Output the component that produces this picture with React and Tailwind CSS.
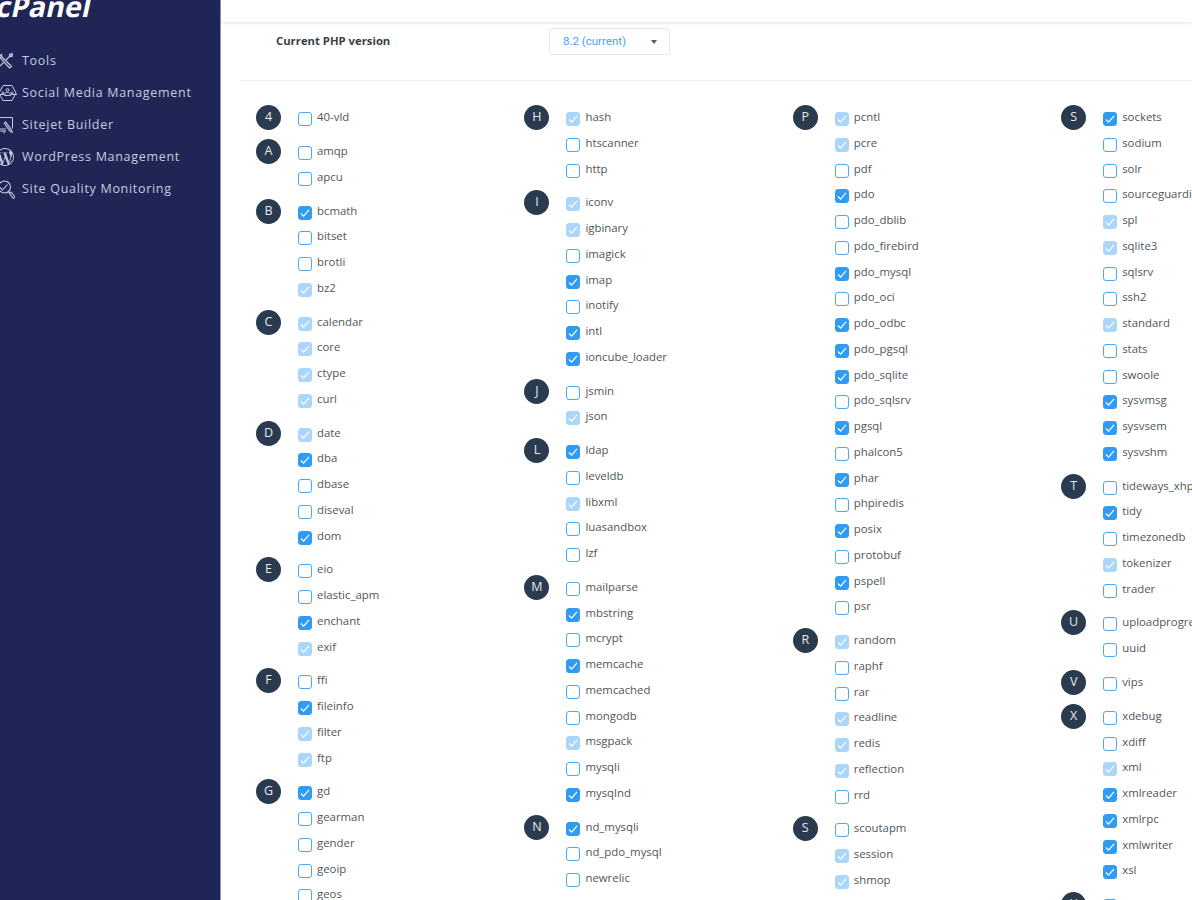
import { SiWordpress } from 'react-icons/si'

// u = unchecked, c = checked, d = checked and locked
const columns = [
  [
    ['4', ['40-vld:u']],
    ['A', ['amqp:u', 'apcu:u']],
    ['B', ['bcmath:c', 'bitset:u', 'brotli:u', 'bz2:d']],
    ['C', ['calendar:d', 'core:d', 'ctype:d', 'curl:d']],
    ['D', ['date:d', 'dba:c', 'dbase:u', 'diseval:u', 'dom:c']],
    ['E', ['eio:u', 'elastic_apm:u', 'enchant:c', 'exif:d']],
    ['F', ['ffi:u', 'fileinfo:c', 'filter:d', 'ftp:d']],
    ['G', ['gd:c', 'gearman:u', 'gender:u', 'geoip:u', 'geos:u']],
  ],
  [
    ['H', ['hash:d', 'htscanner:u', 'http:u']],
    ['I', ['iconv:d', 'igbinary:d', 'imagick:u', 'imap:c', 'inotify:u', 'intl:c', 'ioncube_loader:c']],
    ['J', ['jsmin:u', 'json:d']],
    ['L', ['ldap:c', 'leveldb:u', 'libxml:d', 'luasandbox:u', 'lzf:u']],
    ['M', ['mailparse:u', 'mbstring:c', 'mcrypt:u', 'memcache:c', 'memcached:u', 'mongodb:u', 'msgpack:d', 'mysqli:u', 'mysqlnd:c']],
    ['N', ['nd_mysqli:c', 'nd_pdo_mysql:u', 'newrelic:u']],
    ['O', ['oauth:u']],
  ],
  [
    ['P', ['pcntl:d', 'pcre:d', 'pdf:u', 'pdo:c', 'pdo_dblib:u', 'pdo_firebird:u', 'pdo_mysql:c', 'pdo_oci:u', 'pdo_odbc:c', 'pdo_pgsql:c', 'pdo_sqlite:c', 'pdo_sqlsrv:u', 'pgsql:c', 'phalcon5:u', 'phar:c', 'phpiredis:u', 'posix:c', 'protobuf:u', 'pspell:c', 'psr:u']],
    ['R', ['random:d', 'raphf:u', 'rar:u', 'readline:d', 'redis:d', 'reflection:d', 'rrd:u']],
    ['S', ['scoutapm:u', 'session:d', 'shmop:d']],
  ],
  [
    ['S', ['sockets:c', 'sodium:u', 'solr:u', 'sourceguardian:u', 'spl:d', 'sqlite3:d', 'sqlsrv:u', 'ssh2:u', 'standard:d', 'stats:u', 'swoole:u', 'sysvmsg:c', 'sysvsem:c', 'sysvshm:c']],
    ['T', ['tideways_xhprof:u', 'tidy:c', 'timezonedb:u', 'tokenizer:d', 'trader:u']],
    ['U', ['uploadprogress:u', 'uuid:u']],
    ['V', ['vips:u']],
    ['X', ['xdebug:u', 'xdiff:u', 'xml:d', 'xmlreader:c', 'xmlrpc:c', 'xmlwriter:c', 'xsl:c']],
    ['Y', ['yaf:u']],
  ],
]

const ToolsIcon = () => (
  <svg width="16" height="16" viewBox="0 0 16 16" fill="none" stroke="currentColor" strokeWidth="1.2" className="-ml-[1px]">
    <path d="M2.500 4 12.500 15l2-1.500L4 3" />
    <path d="M1 4.500C0 3 0 1.500 1.500 .5L3 2.500l1.500-1C5 3 4 5 2 4.800" />
    <path d="M14.500 1.500 9 7M6.500 9.500 1.500 14.500" />
    <path d="M12.500 1.500 15 .5l.5 2.500-2 .5z" />
  </svg>
)

const SocialIcon = () => (
  <svg width="19" height="18" viewBox="0 0 19 18" fill="none" stroke="currentColor" strokeWidth="1">
    <path d="M5 1.500h9l4 7.500-4 7.500H5L1 9z" />
    <circle cx="9.500" cy="6" r="1.400" />
    <path d="M6.500 11.500c0-2 1.300-3 3-3s3 1 3 3z" />
    <path d="M0 10.500h6M13 10.500h6" />
    <circle cx="5" cy="9" r="1" />
    <circle cx="14" cy="9" r="1" />
  </svg>
)

const SitejetIcon = () => (
  <svg width="17" height="18" viewBox="0 0 17 18" fill="none" stroke="currentColor" strokeWidth="1">
    <path d="M0 1.500h14.500v11" />
    <path d="M0 13h8M0 15h8M1 15v2.500M6 15v2.500" />
    <path d="M7.500 5.500 13 13l1.500 3.500-3-1.500L6 7z" fill="currentColor" fillOpacity="0.5" />
  </svg>
)

const QualityIcon = () => (
  <svg width="17" height="19" viewBox="0 0 17 19" fill="none" stroke="currentColor" strokeWidth="1.1">
    <circle cx="6.500" cy="7" r="6" />
    <path d="m2 7.500 2.500 2.500 5-5.500" />
    <path d="m10.500 12 1.500 1.500M11.500 13.500l1.500-1.500 3.500 4a1 1 0 0 1-1.500 2z" />
  </svg>
)

const nav = [
  ['Tools', <ToolsIcon />],
  ['Social Media Management', <SocialIcon />],
  ['Sitejet Builder', <SitejetIcon />],
  ['WordPress Management', <SiWordpress className="-ml-[2px] h-[18px] w-[18px]" />],
  ['Site Quality Monitoring', <QualityIcon />],
]

const Checkbox = ({ state }) => {
  const look = {
    u: 'border-[#4aa8f5] bg-white',
    c: 'border-[#2f9bf4] bg-[#2f9bf4]',
    d: 'border-[#a9d6fa] bg-[#a9d6fa]',
  }
  return (
    <span className={`mt-[8px] flex h-[14px] w-[14px] shrink-0 items-center justify-center rounded-[3px] border-[1.5px] ${look[state]}`}>
      {state !== 'u' && (
        <svg width="10" height="10" viewBox="0 0 10 10" fill="none" stroke="white" strokeWidth="1.2">
          <path d="m1 5.500 2.600 2.600L9 1.800" />
        </svg>
      )}
    </span>
  )
}

const Group = ({ letter, items }) => (
  <div className="mb-2 flex">
    <div className="mt-px flex h-[25px] w-[25px] shrink-0 items-center justify-center rounded-full bg-[#2a3b4f] text-[12.5px] text-[#e6e9ed]">
      {letter}
    </div>
    <div className="ml-[17px] min-w-0">
      {items.map((item) => {
        const [name, state] = item.split(':')
        return (
          <div key={name} className="flex h-[25.75px] items-start whitespace-nowrap">
            <Checkbox state={state} />
            <span className="ml-[5px] mt-[4px] text-[11.4px] leading-[18px] text-[#50565c]">{name}</span>
          </div>
        )
      })}
    </div>
  </div>
)

export default function App() {
  return (
    <div className="flex h-[900px] w-[1192px] overflow-hidden bg-white font-['Open_Sans',sans-serif]">
      <aside className="w-[221px] shrink-0 overflow-hidden border-r border-[#8d93ad] bg-[#1f2655] text-[#c4cae0]">
        <div className="-ml-[4px] h-[45px] -translate-y-[10px] -skew-x-12 text-[28.5px] leading-[32px] font-bold text-white">
          cPanel
        </div>
        <nav className="-ml-[2px]">
          {nav.map(([label, icon]) => (
            <div key={label} className="flex h-[32px] items-center">
              <span className="flex w-[24px] shrink-0 justify-start">{icon}</span>
              <span className="text-[12.5px] tracking-[0.7px]">{label}</span>
            </div>
          ))}
        </nav>
      </aside>
      <main className="min-w-0 flex-1">
        <div className="h-[22px] bg-white shadow-[0_1px_3px_rgba(0,0,0,0.12)]" />
        <div className="ml-[19px] flex h-[59px] items-start border-b border-[#eceef1] pl-[36px] pt-[6px]">
          <span className="w-[273px] pt-[4px] text-[11.3px] leading-[18px] font-bold text-[#3a3f45]">Current PHP version</span>
          <div className="flex h-[27px] w-[121px] items-center justify-between rounded-[3px] border border-[#e4e7ec] pl-[13px] pr-[12px] font-['Roboto',sans-serif] text-[11.5px] text-[#42a5f5]">
            8.2 (current)
            <span className="h-0 w-0 border-x-[3.5px] border-t-[4px] border-x-transparent border-t-[#555b61]" />
          </div>
        </div>
        <div className="ml-[35px] grid grid-cols-[repeat(4,268.4px)] pt-[23px]">
          {columns.map((groups, i) => (
            <div key={i}>
              {groups.map(([letter, items]) => (
                <Group key={letter} letter={letter} items={items} />
              ))}
            </div>
          ))}
        </div>
      </main>
    </div>
  )
}
